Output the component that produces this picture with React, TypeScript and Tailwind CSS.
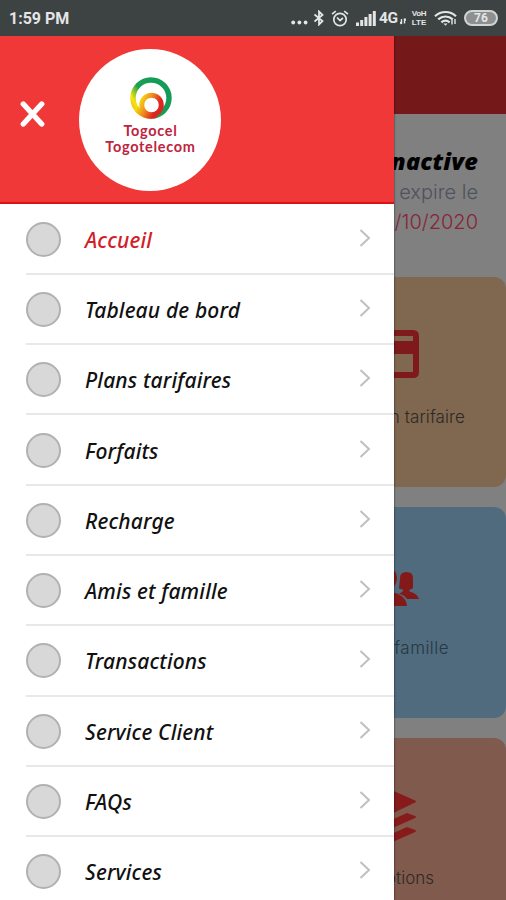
import React from 'react';

interface MenuItem {
  label: string;
  active?: boolean;
}

const menuItems: MenuItem[] = [
  { label: 'Accueil', active: true },
  { label: 'Tableau de bord' },
  { label: 'Plans tarifaires' },
  { label: 'Forfaits' },
  { label: 'Recharge' },
  { label: 'Amis et famille' },
  { label: 'Transactions' },
  { label: 'Service Client' },
  { label: 'FAQs' },
  { label: 'Services' },
];

const StatusBar: React.FC = () => (
  <div className="h-9 shrink-0 bg-[#3d4242] flex items-center justify-between pl-[9px] pr-2 font-[Roboto,sans-serif] text-[#e4e6e6]">
    <span className="text-[16px] leading-none font-bold pt-[2px]">1:59 PM</span>
    <div className="flex items-center">
      {/* More notifications */}
      <svg className="w-[18px] h-4 mr-[5px]" viewBox="0 0 18 16" fill="currentColor">
        <circle cx="2.2" cy="12.500" r="1.900" />
        <circle cx="8.400" cy="12.500" r="1.900" />
        <circle cx="14.600" cy="12.500" r="1.900" />
      </svg>
      {/* Bluetooth */}
      <svg className="w-[10px] h-4 mr-[7px]" viewBox="0 0 10 16" fill="none" stroke="currentColor" strokeWidth="1.800">
        <path d="M0.500 4.500l8 6.500L5 14.500V1.500l3.500 3.500L0.500 11.500" />
      </svg>
      {/* Alarm */}
      <svg className="w-[18px] h-[17px] mr-[7px]" viewBox="0 0 18 17" fill="none" stroke="currentColor" strokeWidth="1.700">
        <circle cx="9" cy="9.500" r="6.200" />
        <path d="M1 4.200L4.800 1.200M17 4.200L13.200 1.200M6 7.500l3 3 3-2.500" />
      </svg>
      {/* Signal */}
      <svg className="w-5 h-[15px] mr-[3px]" viewBox="0 0 20 15" fill="currentColor">
        <rect x="0" y="11.500" width="3" height="3.500" />
        <rect x="4.200" y="9" width="3" height="6" />
        <rect x="8.400" y="6" width="3" height="9" />
        <rect x="12.600" y="3" width="3" height="12" />
        <rect x="16.800" y="0" width="3" height="15" />
      </svg>
      <span className="w-5 text-[15.500px] leading-none font-bold tracking-[-0.3px] pt-[2px]">4G</span>
      <svg className="w-[6px] h-4 mr-[5px] ml-px" viewBox="0 0 6 16" fill="none" stroke="currentColor" strokeWidth="1.400">
        <path d="M1.500 9v5M4.500 13.500v-5M0 12l1.500 2M6 10.500L4.500 8.500" />
      </svg>
      <div className="w-4 flex flex-col items-center font-['Liberation_Sans',sans-serif] text-[8px] leading-[9px] font-bold mr-[7px]">
        <span className="tracking-[-0.3px]">VoH</span>
        <span>LTE</span>
      </div>
      {/* Wifi */}
      <svg className="w-[23px] h-4 mr-[7px]" viewBox="0 0 23 16" fill="none" stroke="currentColor" strokeWidth="2.200">
        <path d="M1 6.200C7 .6 16 .6 22 6.200M4.200 9.400c4.300-3.900 10.300-3.900 14.600 0M7.400 12.400c2.500-2.200 5.700-2.200 8.200 0" />
        <path d="M9.500 13.500h4l-2 2.200z" fill="currentColor" stroke="none" />
        <path d="M18 14.500v-5M21 9v5" strokeWidth="1.400" />
      </svg>
      <div className="w-[34px] h-4 rounded-full border-2 border-[#d2d4d4] bg-[#8d9090] flex items-center justify-center text-[12px] leading-none font-bold">
        76
      </div>
    </div>
  </div>
);

const CardIcon: React.FC = () => (
  <svg className="w-[60px] h-[50px] ml-1" viewBox="0 0 60 50">
    <path
      fill="#7f191b"
      fillRule="evenodd"
      d="M6 1h48q6 0 6 6v36q0 6-6 6H6q-6 0-6-6V7q0-6 6-6zM6 7v5h48V7zM6 25v18h48V25z"
    />
  </svg>
);

const PeopleIcon: React.FC = () => (
  <svg className="w-[64px] h-[40px]" viewBox="0 0 64 40" fill="#84191a">
    <path d="M45 10q0-6 6.500-6t6.500 6v10q-2 2-3.500 1.500v2q8 2 9.500 7.500H52q-3-4-8-5.500 3-1 4-2.500v-1.500q-2 0-4-1z" />
    <path d="M19 10q0-6-6.500-6T6 10v10q2 2 3.500 1.500v2Q2 25.500 0 31h12q3-4 8-5.500-3-1-4-2.500v-1.500q2 0 4-1z" />
    <path d="M23 9q0-9 9-9t10 9c0 6-2 9-5 11v4q14 3 15 14H12q1-11 15-14v-4q-4-4-4-11z" />
  </svg>
);

const LayersIcon: React.FC = () => (
  <svg className="w-[58px] h-[58px]" viewBox="0 0 58 58" fill="#871a1b">
    <path d="M29 0l28 12.500q2 1 0 2L29 28 1 14.500q-2-1 0-2z" />
    <path d="M29 34l20-9 8 3q2 1 0 2L29 42.500 1 30q-2-1 0-2l8-3z" />
    <path d="M29 48l20-9 8 3q2 1 0 2L29 56.500 1 44q-2-1 0-2l8-3z" />
  </svg>
);

const Drawer: React.FC = () => (
  <aside className="absolute top-0 left-0 w-[394px] h-full bg-white overflow-hidden shadow-[0_0_2px_rgba(0,0,0,0.7)]">
    <div className="h-[168px] bg-[#ef3837] border-b-2 border-[#d81419] flex items-start">
      <button className="ml-5 mt-[64px] w-[26px] h-[28px]" aria-label="Fermer">
        <svg viewBox="0 0 26 28" fill="none" stroke="#fff" strokeWidth="5.400" strokeLinecap="round">
          <path d="M3.300 4L21.700 24M21.700 4L3.300 24" />
        </svg>
      </button>
      <div className="ml-[33px] mt-[13px] w-[142px] h-[142px] rounded-full bg-white flex flex-col items-center pt-[28px]">
        <svg className="w-[42px] h-[42px] ml-[2px]" viewBox="0 0 42 42" fill="none">
          <defs>
            <linearGradient id="outer" x1="0" y1="30" x2="31" y2="12" gradientUnits="userSpaceOnUse">
              <stop offset="0" stopColor="#f6b51d" />
              <stop offset="0.180" stopColor="#f4e50b" />
              <stop offset="0.480" stopColor="#18a052" />
              <stop offset="1" stopColor="#159b58" />
            </linearGradient>
            <linearGradient id="inner" x1="10" y1="22" x2="30" y2="32" gradientUnits="userSpaceOnUse">
              <stop offset="0" stopColor="#f5df10" />
              <stop offset="0.450" stopColor="#ee8420" />
              <stop offset="0.850" stopColor="#dc261f" />
            </linearGradient>
          </defs>
          <circle cx="21" cy="21" r="18" stroke="url(#outer)" strokeWidth="5.400" />
          <path d="M6 31A18 18 0 0 0 26 38.200" stroke="url(#inner)" strokeWidth="5.400" />
          <circle cx="21.500" cy="28" r="9.800" stroke="url(#inner)" strokeWidth="5" />
        </svg>
        <div className="mt-[4px] ml-px text-center font-[Lato,sans-serif] font-bold text-[14.500px] leading-[16px] text-[#bd2540]">
          <div className="tracking-[0.700px]">Togocel</div>
          <div className="tracking-[0.700px]">Togotelecom</div>
        </div>
      </div>
    </div>

    <nav className="pl-[26px] pt-[0.500px]">
      {menuItems.map((item) => (
        <div key={item.label} className="h-[70.300px] flex flex-col">
          <div className="flex-1 flex items-center">
            <span className="w-[35px] h-[35px] mt-px shrink-0 rounded-full bg-[#d8d8d8] border-2 border-[#b1b1b1]" />
            <span
              className={`ml-[24px] mt-[3px] flex-1 font-['Noto_Sans',sans-serif] italic font-medium text-[21px] leading-none tracking-[0.150px] ${
                item.active ? 'text-[#d12027]' : 'text-[#111111]'
              }`}
            >
              {item.label}
            </span>
            <svg className="w-3 h-5 mr-[23px] -mt-[2px]" viewBox="0 0 12 20" fill="none" stroke="#bfbfbf" strokeWidth="2">
              <path d="M1.500 2L10 10l-8.500 8" />
            </svg>
          </div>
          <div className="h-[2px] bg-[#e8e8e8]" />
        </div>
      ))}
    </nav>
  </aside>
);

export default function App() {
  return (
    <div className="w-[506px] h-[900px] overflow-hidden flex flex-col">
      <StatusBar />
      <div className="relative flex-1 min-h-0 overflow-hidden bg-[#808080]">
        {/* Dimmed home page behind the drawer */}
        <div className="h-[78px] bg-[#751819]" />
        <div className="h-[162.500px] pr-7 pt-[31px] text-right">
          <div className="font-['Open_Sans',sans-serif] italic font-extrabold text-[23.500px] leading-[32px] tracking-[0.200px] text-black">
            Inactive
          </div>
          <div className="font-[Inter,sans-serif] font-light text-[20px] leading-[30px] text-[#50515e]">expire le</div>
          <div className="font-[Inter,sans-serif] font-light text-[20px] leading-[30px] text-[#87243a]">31/10/2020</div>
        </div>
        <div className="ml-[268px] flex flex-col gap-5 font-[Inter,sans-serif] font-light text-[17px] leading-5 text-[#2e2927]">
          <div className="h-[210.500px] shrink-0 rounded-[12px] bg-[#80674f] flex flex-col items-center pt-[52px]">
            <CardIcon />
            <div className="self-end mr-[41px] mt-[28px] tracking-[0.100px]">Plan tarifaire</div>
          </div>
          <div className="h-[210.500px] shrink-0 rounded-[12px] bg-[#506b7d] flex flex-col items-center pt-[61px] text-[#263844]">
            <PeopleIcon />
            <div className="self-end mr-[57px] mt-[30px] tracking-[0.450px]">Amis et famille</div>
          </div>
          <div className="h-[210.500px] shrink-0 rounded-[12px] bg-[#805a4d] flex flex-col items-center pt-[50px]">
            <LayersIcon />
            <div className="self-end mr-[72px] mt-[22px]">Promotions</div>
          </div>
        </div>
        <Drawer />
      </div>
    </div>
  );
}
